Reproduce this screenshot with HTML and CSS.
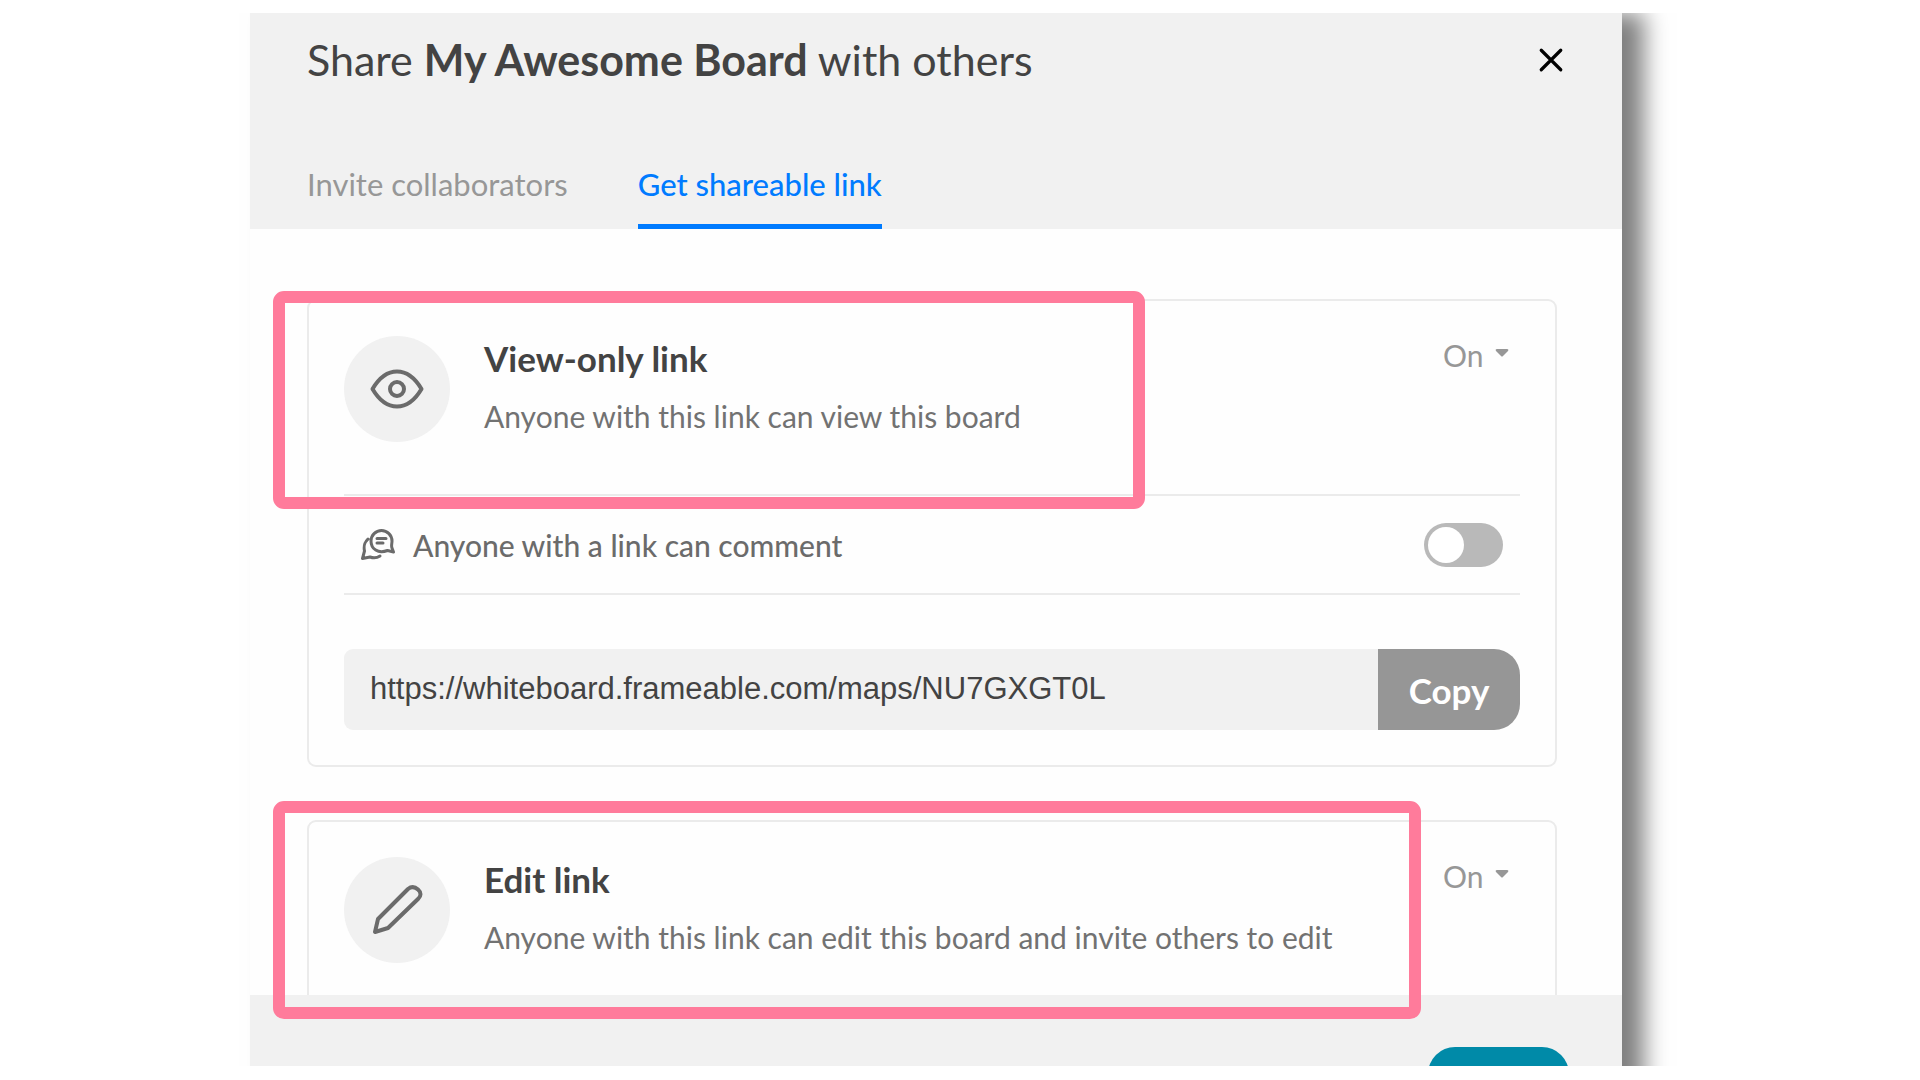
FILE: index.html
```html
<!DOCTYPE html>
<html lang="en">
<head>
<meta charset="utf-8">
<title>Share My Awesome Board</title>
<link rel="stylesheet" href="styles.css">
</head>
<body>
<main class="stage">
  <section class="dialog" role="dialog" aria-labelledby="dialog-title">
    <header class="dialog-header">
      <div class="title-row">
        <h1 class="dialog-title" id="dialog-title">Share <strong>My Awesome Board</strong> with others</h1>
        <button class="close" type="button" aria-label="Close">
          <svg class="close-icon" viewBox="0 0 24 24"><path d="M3 3 21 21M21 3 3 21"/></svg>
        </button>
      </div>
      <nav class="tabs">
        <a class="tab" href="#invite">Invite collaborators</a>
        <a class="tab tab-active" href="#link" aria-current="page">Get shareable link</a>
      </nav>
    </header>

    <div class="dialog-body">
      <article class="card">
        <div class="card-head">
          <span class="badge">
            <svg class="badge-icon" viewBox="0 0 54 54"><path d="M2.500 27C9 16 17 9.500 27 9.500S45 16 51.500 27C45 38 37 44.500 27 44.500S9 38 2.500 27Z"/><circle cx="27" cy="27" r="7"/></svg>
          </span>
          <div class="card-text">
            <h2 class="card-title">View-only link</h2>
            <p class="card-desc">Anyone with this link can view this board</p>
          </div>
          <div class="access">
            <select class="access-select" aria-label="View-only link access"><option>On</option><option>Off</option></select>
            <svg class="caret" viewBox="0 0 14 14"><path d="M2 1h10q2 0 1 2L8 8q-1 1-2 0L1 3Q0 1 2 1Z"/></svg>
          </div>
        </div>
        <div class="comment-row">
          <svg class="comment-icon" viewBox="0 0 34 32"><path d="M10 12a10.500 10.500 0 1 1 21 0c0 3-1 5 0 7l1.500 4-6-1.500C17 25 10 20 10 12ZM16 9.500h9M16 14h6M7 10c-4 4-4.500 7-3.500 12L1.500 29.500 9 28c4 1.500 7 1 10-1"/></svg>
          <label class="comment-label" for="comment">Anyone with a link can comment</label>
          <input class="switch" id="comment" type="checkbox" role="switch">
        </div>
        <div class="link-row">
          <input class="link-field" type="text" readonly aria-label="View-only link address" value="https://whiteboard.frameable.com/maps/NU7GXGT0L">
          <button class="copy" type="button">Copy</button>
        </div>
      </article>

      <article class="card">
        <div class="card-head">
          <span class="badge">
            <svg class="badge-icon" viewBox="0 0 54 54"><path d="M5 49 8 36 38 6Q43 2 48 6.500T48 16L18 45Z"/></svg>
          </span>
          <div class="card-text">
            <h2 class="card-title">Edit link</h2>
            <p class="card-desc">Anyone with this link can edit this board and invite others to edit</p>
          </div>
          <div class="access">
            <select class="access-select" aria-label="Edit link access"><option>On</option><option>Off</option></select>
            <svg class="caret" viewBox="0 0 14 14"><path d="M2 1h10q2 0 1 2L8 8q-1 1-2 0L1 3Q0 1 2 1Z"/></svg>
          </div>
        </div>
      </article>
    </div>

    <footer class="dialog-footer">
      <button class="done" type="button" aria-label="Done"></button>
    </footer>

    <div class="highlight highlight-view"></div>
    <div class="highlight highlight-edit"></div>
  </section>
</main>
</body>
</html>
```
FILE: styles.css
```css
* {
  box-sizing: border-box;
}

body {
  margin: 0;
  background: #fff;
  color: #434343;
  font-family: Lato, "Liberation Sans", sans-serif;
  font-size: 30px;
  line-height: 40px;
}

h1,
h2,
p {
  margin: 0;
}

button,
select,
input {
  margin: 0;
  border: 0;
  font: inherit;
}

svg {
  display: block;
  fill: none;
  stroke-linecap: round;
  stroke-linejoin: round;
}

/* The visible area cuts the dialog off above the window's lower edge. */
.stage {
  height: calc(100vh - 27px);
  margin: 13px 0 14px;
  padding: 0 298px 0 250px;
  overflow: hidden;
}

.dialog {
  position: relative;
  display: flex;
  flex-direction: column;
  height: calc(100% + 60px);
  background: #fefefe;
  box-shadow: 22px 0 22px rgba(0, 0, 0, 0.5);
}

.dialog-header {
  padding: 22px 58px 0 57px;
  background: #f1f1f1;
}

.title-row {
  display: flex;
  align-items: center;
  justify-content: space-between;
}

.dialog-title {
  font-size: 43px;
  font-weight: 400;
  line-height: 50px;
}

.close {
  padding: 0;
  background: none;
}

.close-icon {
  width: 26px;
  height: 26px;
  stroke: #000;
  stroke-width: 3;
}

.tabs {
  display: flex;
  gap: 70px;
  margin-top: 79px;
}

.tab {
  padding-bottom: 20px;
  border-bottom: 5px solid transparent;
  color: #979797;
  font-size: 31px;
  text-decoration: none;
}

.tab-active {
  border-color: #007bff;
  color: #007bff;
  font-weight: 500;
}

.dialog-body {
  display: flex;
  flex: 1;
  flex-direction: column;
  gap: 53px;
  min-height: 0;
  padding: 70px 65px 0 57px;
  overflow: hidden;
}

.card {
  flex: none;
  padding: 35px;
  border: 2px solid #ebebeb;
  border-radius: 9px;
}

.card-head {
  display: flex;
  padding-bottom: 52px;
}

.badge {
  display: grid;
  place-items: center;
  width: 106px;
  height: 106px;
  border-radius: 50%;
  background: #f1f1f1;
}

.badge-icon {
  width: 54px;
  height: 54px;
  stroke: #6b6b6b;
  stroke-width: 4;
}

.card-text {
  flex: 1;
  padding-left: 34px;
}

.card-title {
  margin: 2px 0 18px;
  font-size: 35px;
  font-weight: 700;
}

.card-desc {
  color: #727272;
}

.access {
  display: flex;
  align-items: center;
  gap: 10px;
  height: 38px;
  margin-right: 11px;
}

.access-select {
  width: 42px;
  padding: 0;
  background: none;
  color: #979797;
  appearance: none;
}

.caret {
  width: 14px;
  height: 14px;
  fill: #979797;
}

.comment-row {
  display: flex;
  align-items: center;
  height: 101px;
  padding: 0 17px;
  border: solid #ebebeb;
  border-width: 2px 0;
}

.comment-icon {
  width: 34px;
  height: 32px;
  stroke: #6b6b6b;
  stroke-width: 3;
}

.comment-label {
  flex: 1;
  padding-left: 18px;
  color: #6b6b6b;
  font-weight: 500;
}

.switch {
  width: 79px;
  height: 44px;
  padding: 4px;
  border-radius: 22px;
  background: #b9b9b9;
  appearance: none;
}

.switch::before {
  display: block;
  width: 36px;
  height: 36px;
  border-radius: 50%;
  background: #fff;
  content: "";
}

.switch:checked::before {
  margin-left: auto;
}

.link-row {
  display: flex;
  height: 81px;
  margin-top: 54px;
}

.link-field {
  flex: 1;
  min-width: 0;
  padding: 0 26px 2px;
  border-radius: 9px 0 0 9px;
  background: #f1f1f1;
  color: #434343;
  font-family: "Liberation Sans", Arial, sans-serif;
  font-size: 31px;
}

.copy {
  width: 142px;
  border-radius: 0 26px 26px 0;
  background: #969696;
  color: #fff;
  font-size: 35px;
  font-weight: 700;
}

.dialog-footer {
  display: flex;
  flex: none;
  justify-content: flex-end;
  height: 131px;
  padding: 52px 53px 0;
  background: #f1f1f1;
}

.done {
  width: 141px;
  height: 60px;
  border-radius: 27px;
  background: #008aa8;
}

/* Callout frames drawn over the dialog. */
.highlight {
  position: absolute;
  left: 23px;
  height: 218px;
  border: 12px solid #ff7b9b;
  border-radius: 11px;
  pointer-events: none;
}

.highlight-view {
  top: 278px;
  right: 477px;
}

.highlight-edit {
  top: 788px;
  right: 201px;
}
```
